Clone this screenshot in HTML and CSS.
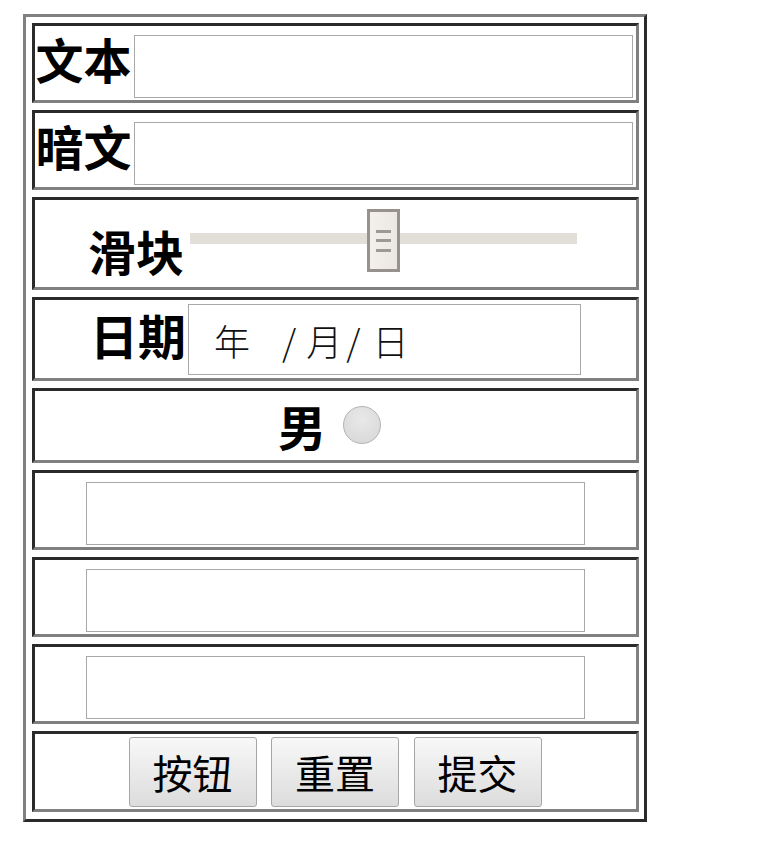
FILE: index.html
```html
<!DOCTYPE html>
<html lang="zh-CN">
<head>
    <meta charset="UTF-8">
    <meta name="viewport" content="width=device-width, initial-scale=1.0">
    <title>表单</title>
    <link rel="stylesheet" href="styles.css">
</head>
<body>
<form class="sheet" action="#">
    <!-- 文本 -->
    <div class="sheet__row sheet__row--field">
        <label class="label label--top" for="text">文本</label>
        <input class="input" type="text" id="text">
    </div>

    <!-- 暗文 -->
    <div class="sheet__row sheet__row--field">
        <label class="label label--top" for="pwd">暗文</label>
        <input class="input" type="password" id="pwd">
    </div>

    <!-- 滑块 -->
    <div class="sheet__row sheet__row--slider">
        <label class="label label--slider" for="range">滑块</label>
        <input class="slider" type="range" id="range" min="0" max="100" value="50">
    </div>

    <!-- 日期 -->
    <div class="sheet__row sheet__row--date">
        <label class="label label--date">日期</label>
        <div class="date">
            <span class="date__part date__part--year">年</span>
            <span class="date__part date__part--sep1">/</span>
            <span class="date__part date__part--month">月</span>
            <span class="date__part date__part--sep2">/</span>
            <span class="date__part date__part--day">日</span>
        </div>
    </div>

    <!-- 男 -->
    <div class="sheet__row sheet__row--radio">
        <label class="label label--radio" for="male">男</label>
        <input class="radio" type="radio" id="male" name="sex">
    </div>

    <div class="sheet__row">
        <input class="input" type="text">
    </div>
    <div class="sheet__row">
        <input class="input" type="text">
    </div>
    <div class="sheet__row">
        <input class="input" type="text">
    </div>

    <!-- buttons -->
    <div class="sheet__row sheet__row--buttons">
        <button class="btn" type="button">按钮</button>
        <button class="btn" type="reset">重置</button>
        <button class="btn" type="submit">提交</button>
    </div>
</form>
</body>
</html>
```

FILE: styles.css
```css
:root {
    /* COLORS */
    --dark: #2a2a2a;
    --gray: #808080;
    --field: #a9a9a9;

    font-family: "Noto Sans CJK SC", "Noto Sans", sans-serif;
}

body {
    margin: 14px 0 0 23px;
    background: #fff;
}

.sheet {
    box-sizing: border-box;
    width: 624px;
    border: 3px solid;
    border-color: var(--gray) var(--dark) var(--dark) var(--gray);
    padding: 6px 5px 7px 6px;
    display: flex;
    flex-direction: column;
    gap: 7px;
}

.sheet__row {
    box-sizing: border-box;
    height: 80px;
    border: 3px solid;
    border-color: var(--dark) var(--gray) var(--gray) var(--dark);
    display: flex;
    justify-content: center;
    align-items: flex-start;
    gap: 2px;
}

.sheet__row--field {
    padding-right: 3px;
}

.sheet__row--slider {
    height: 93px;
    gap: 6px;
}

.sheet__row--date {
    height: 84px;
}

.sheet__row--radio {
    height: 75px;
    gap: 17px;
}

.sheet__row--buttons {
    height: 81px;
    gap: 14.5px;
    padding-right: 1px;
}

.label {
    font-size: 48px;
    font-weight: bold;
    line-height: 48px;
    color: #000;
}

.label--top {
    margin-top: 8px;
}

.label--slider {
    margin-top: 26px;
}

.label--date {
    margin-top: 10px;
}

.label--radio {
    margin-top: 10px;
}

.input {
    box-sizing: border-box;
    width: 499px;
    height: 63px;
    margin: 9px 0 0;
    border: 1px solid var(--field);
    padding: 0 4px;
    font-size: 32px;
    font-family: inherit;
    outline: none;
}

/* range */
.slider {
    -webkit-appearance: none;
    appearance: none;
    width: 387px;
    height: 11px;
    margin: 33px 6px 0 0;
    padding: 0;
    background: transparent;
}

.slider::-webkit-slider-runnable-track {
    height: 11px;
    background: #e2ded8;
}

.slider::-webkit-slider-thumb {
    -webkit-appearance: none;
    box-sizing: border-box;
    width: 33px;
    height: 63px;
    margin-top: -24px;
    border: 3px solid #97928d;
    background:
        linear-gradient(#9d9993, #9d9993) center 18px / 15px 3px no-repeat,
        linear-gradient(#9d9993, #9d9993) center 27px / 15px 3px no-repeat,
        linear-gradient(#9d9993, #9d9993) center 37px / 15px 3px no-repeat,
        linear-gradient(90deg, #f3f0ed, #ebe7e3);
}

/* date */
.date {
    box-sizing: border-box;
    width: 393px;
    height: 71px;
    margin-top: 4px;
    border: 1px solid var(--field);
    padding-left: 25px;
    display: flex;
    align-items: center;
    font-size: 36px;
    font-weight: 300;
    color: #111;
}

.date__part--sep1 {
    margin-left: 32px;
}

.date__part--month {
    margin-left: 10px;
}

.date__part--sep2 {
    margin-left: 4px;
}

.date__part--day {
    margin-left: 12px;
}

/* radio */
.radio {
    -webkit-appearance: none;
    appearance: none;
    box-sizing: border-box;
    width: 38px;
    height: 38px;
    margin: 15px 12px 0 0;
    border: 1px solid #b3b3b3;
    border-radius: 50%;
    background: radial-gradient(circle at 50% 35%, #e9e9e9, #d5d5d5);
}

.btn {
    box-sizing: border-box;
    width: 128px;
    height: 70px;
    margin-top: 3px;
    padding: 0;
    border: 1px solid #a6a6a6;
    border-radius: 3px;
    background: linear-gradient(#f8f8f8, #dcdcdc);
    color: #000;
    font-family: inherit;
    font-size: 40px;
    cursor: pointer;
}
```
